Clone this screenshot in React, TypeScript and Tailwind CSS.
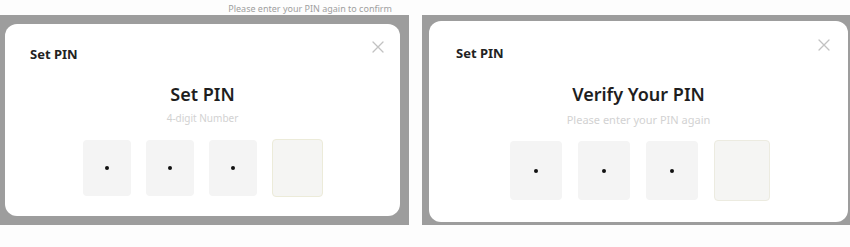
import React from "react";

function CloseX({ className }: { className: string }) {
  return (
    <svg className={className} width="12" height="12" viewBox="0 0 12 12" fill="none">
      <path d="M1 1L11 11M11 1L1 11" stroke="#c2c2c2" strokeWidth="1.3" strokeLinecap="round" />
    </svg>
  );
}

function Dot() {
  return <span className="block w-[4px] h-[4px] rounded-full bg-[#111]" />;
}

export default function App() {
  return (
    <div
      className="w-[850px] h-[247px] bg-[#fdfdfd] flex overflow-hidden"
      style={{ fontFamily: '"Noto Sans", "Open Sans", Arial, sans-serif' }}
    >
      {/* Left panel */}
      <div className="w-[409px] flex flex-col">
        <div className="h-[15px] flex items-end justify-end pr-[17px] pb-[1px]">
          <span className="text-[9px] leading-[11px] text-[#a0a0a0]">Please enter your PIN again to confirm</span>
        </div>
        <div className="h-[210px] bg-[#9d9d9d] pl-[5px] pt-[9px] pr-[9px] pb-[9px]">
          <div className="relative h-full bg-white rounded-[12px] flex flex-col">
            <CloseX className="absolute top-[17px] right-[16px]" />
            <div className="pl-[25px] pt-[22px] text-[13px] leading-[16px] font-bold text-[#222]">Set PIN</div>
            <div className="mt-[20px] text-center text-[18px] leading-[24px] font-semibold text-[#1e1e1e]">Set PIN</div>
            <div className="mt-[5px] text-center text-[10px] leading-[14px] text-[#d2d2d2]">4-digit Number</div>
            <div className="mt-[15px] flex justify-center gap-[15px]">
              <div className="w-[48px] h-[56px] rounded-[4px] bg-[#f4f4f4] flex items-center justify-center"><Dot /></div>
              <div className="w-[48px] h-[56px] rounded-[4px] bg-[#f4f4f4] flex items-center justify-center"><Dot /></div>
              <div className="w-[48px] h-[56px] rounded-[4px] bg-[#f4f4f4] flex items-center justify-center"><Dot /></div>
              <div className="w-[51px] h-[58px] -mt-[1px] rounded-[4px] bg-[#f5f5f3] border border-[#ecebd9]" />
            </div>
          </div>
        </div>
      </div>

      <div className="w-[13px]" />

      {/* Right panel */}
      <div className="w-[428px] flex flex-col">
        <div className="h-[15px]" />
        <div className="h-[210px] bg-[#9d9d9d] pl-[7px] pt-[6px] pr-[2px] pb-[3px]">
          <div className="relative h-full bg-white rounded-[12px] flex flex-col">
            <CloseX className="absolute top-[18px] right-[18px]" />
            <div className="pl-[27px] pt-[24px] text-[13px] leading-[16px] font-bold text-[#222]">Set PIN</div>
            <div className="mt-[20px] text-center text-[18px] leading-[26px] font-semibold text-[#1e1e1e]">Verify Your PIN</div>
            <div className="mt-[6px] text-center text-[11px] leading-[14px] text-[#d2d2d2]">Please enter your PIN again</div>
            <div className="mt-[14px] flex justify-center gap-[16px] pl-[2px]">
              <div className="w-[52px] h-[59px] rounded-[4px] bg-[#f4f4f4] flex items-center justify-center"><Dot /></div>
              <div className="w-[52px] h-[59px] rounded-[4px] bg-[#f4f4f4] flex items-center justify-center"><Dot /></div>
              <div className="w-[52px] h-[59px] rounded-[4px] bg-[#f4f4f4] flex items-center justify-center"><Dot /></div>
              <div className="w-[56px] h-[61px] -mt-[1px] rounded-[4px] bg-[#f5f5f3] border border-[#ecebe0]" />
            </div>
          </div>
        </div>
      </div>
    </div>
  );
}
